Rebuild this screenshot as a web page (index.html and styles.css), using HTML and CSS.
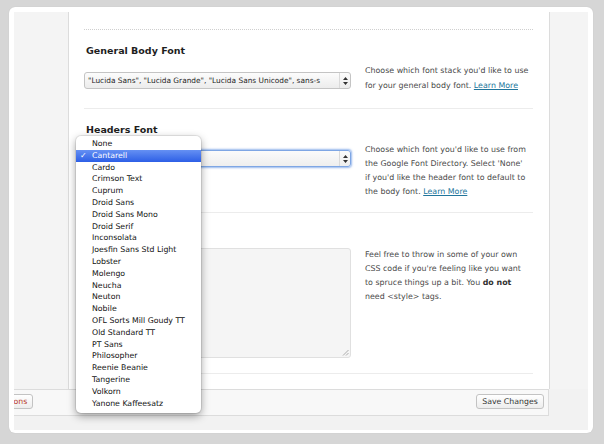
FILE: index.html
```html
<!DOCTYPE html>
<html>
<head>
<meta charset="utf-8">
<link rel="stylesheet" href="styles.css">
</head>
<body>
<div class="panel">
  <div class="inner">
    <div class="main">
      <div class="lcol"></div>
      <div class="content">
        <div class="section s1">
          <div class="field">
            <h3 class="label">General Body Font</h3>
            <div class="select">
              <span class="val">"Lucida Sans", "Lucida Grande", "Lucida Sans Unicode", sans-s</span>
              <span class="arrows"><svg width="5" height="8" viewBox="0 0 5 8"><path d="M2.5 0 L5 3 H0Z M2.5 8 L0 5 H5Z" fill="#333"/></svg></span>
            </div>
          </div>
          <p class="desc">Choose which font stack you'd like to use<br>for your general body font. <a href="#">Learn More</a></p>
        </div>
        <div class="section s2">
          <div class="field">
            <h3 class="label">Headers Font</h3>
            <div class="select focused">
              <span class="val">Cantarell</span>
              <span class="arrows"><svg width="5" height="8" viewBox="0 0 5 8"><path d="M2.5 0 L5 3 H0Z M2.5 8 L0 5 H5Z" fill="#333"/></svg></span>
            </div>
          </div>
          <p class="desc">Choose which font you'd like to use from<br>the Google Font Directory. Select 'None'<br>if you'd like the header font to default to<br>the body font. <a href="#">Learn More</a></p>
        </div>
        <div class="section s3">
          <div class="field">
            <h3 class="label">Custom CSS</h3>
            <div class="textarea">
              <svg class="grip" width="7" height="7" viewBox="0 0 7 7"><path d="M6.5 1 L1 6.5 M6.5 4 L4 6.5" stroke="#999" stroke-width="0.8"/></svg>
            </div>
          </div>
          <p class="desc">Feel free to throw in some of your own<br>CSS code if you're feeling like you want<br>to spruce things up a bit. You <b>do not</b><br>need &lt;style&gt; tags.</p>
        </div>
      </div>
      <div class="rcol"></div>
    </div>
    <div class="footer">
      <button class="btn reset">Reset Options</button>
      <button class="btn save">Save Changes</button>
    </div>
  </div>
</div>
<ul class="dropdown">
  <li>None</li>
  <li class="sel">Cantarell</li>
  <li>Cardo</li>
  <li>Crimson Text</li>
  <li>Cuprum</li>
  <li>Droid Sans</li>
  <li>Droid Sans Mono</li>
  <li>Droid Serif</li>
  <li>Inconsolata</li>
  <li>Joesfin Sans Std Light</li>
  <li>Lobster</li>
  <li>Molengo</li>
  <li>Neucha</li>
  <li>Neuton</li>
  <li>Nobile</li>
  <li>OFL Sorts Mill Goudy TT</li>
  <li>Old Standard TT</li>
  <li>PT Sans</li>
  <li>Philosopher</li>
  <li>Reenie Beanie</li>
  <li>Tangerine</li>
  <li>Volkorn</li>
  <li>Yanone Kaffeesatz</li>
</ul>
</body>
</html>
```

FILE: styles.css
```css
html, body {
  margin: 0;
  padding: 0;
}
body {
  width: 604px;
  height: 444px;
  overflow: hidden;
  background: #d6d6d6;
  font-family: "DejaVu Sans", Verdana, sans-serif;
  position: relative;
}
.panel {
  margin: 7px 0 0 9px;
  width: 584px;
  height: 426px;
  box-sizing: border-box;
  padding: 5px 5px 3px 5px;
  background: #fff;
  border-radius: 6px;
  box-shadow: 0 0 1px rgba(0,0,0,0.15);
}
.inner {
  height: 418px;
  background: #f2f2f2;
  display: flex;
  flex-direction: column;
}
.main {
  display: flex;
  height: 377px;
}
.lcol {
  width: 54px;
  background: #f4f4f4;
}
.rcol {
  width: 38px;
  background: #f4f4f4;
}
.content {
  width: 482px;
  box-sizing: border-box;
  background: #fff;
  border-left: 1px solid #dcdcdc;
  border-right: 1px solid #dcdcdc;
  padding: 17px 16px 0 15px;
}
.section {
  display: flex;
  align-items: flex-start;
  gap: 14px;
  border-bottom: 1px solid #ececec;
  padding-top: 15px;
}
.field {
  width: 267px;
  display: flex;
  flex-direction: column;
}
.s1 {
  border-top: 1px dotted #cfcfcf;
  padding-bottom: 15px;
}
.s2 {
  padding-bottom: 13px;
}
.s3 {
  padding-bottom: 15px;
}
.label {
  margin: 0 0 15px 2px;
  font-size: 9.5px;
  line-height: 12px;
  font-weight: bold;
  color: #1e1e1e;
}
.s2 .label {
  margin-bottom: 14px;
}
.s3 .label {
  margin-bottom: 8px;
}
.desc {
  width: 168px;
  margin: 19px 0 0 0;
  font-size: 7.9px;
  line-height: 14px;
  color: #4a4a4a;
  white-space: nowrap;
}
.s1 .desc {
  line-height: 14.6px;
}
.s3 .desc {
  margin-top: 20px;
}
.desc a {
  color: #21759b;
  text-decoration: underline;
}
.desc b {
  color: #333;
}
.select {
  height: 17px;
  box-sizing: border-box;
  border: 1px solid #c4c4c4;
  border-radius: 3px;
  background: linear-gradient(#fcfcfc, #ececec);
  display: flex;
  align-items: center;
  overflow: hidden;
}
.select .val {
  flex: 1;
  padding-left: 3px;
  font-size: 7.4px;
  color: #1e1e1e;
  white-space: nowrap;
  overflow: hidden;
}
.select .arrows {
  width: 10px;
  height: 100%;
  border-left: 1px solid #dadada;
  display: flex;
  align-items: center;
  justify-content: center;
}
.select.focused {
  border-color: #7ea6e4;
  box-shadow: 0 0 2px 1px rgba(110,155,230,0.7);
  background: linear-gradient(#fbfbfb, #eeeeee);
}
.textarea {
  height: 110px;
  box-sizing: border-box;
  border: 1px solid #e0e0e0;
  border-radius: 3px;
  background: #f5f5f5;
  position: relative;
}
.grip {
  position: absolute;
  right: 1px;
  bottom: 1px;
}
.footer {
  width: 535px;
  height: 27px;
  box-sizing: border-box;
  background: #f8f8f8;
  border-top: 1px solid #dcdcdc;
  border-bottom: 1px solid #dcdcdc;
  border-right: 1px solid #dcdcdc;
  display: flex;
  justify-content: space-between;
  align-items: flex-start;
  overflow: hidden;
  padding-top: 4px;
}
.btn {
  height: 15px;
  box-sizing: border-box;
  border: 1px solid #c3c3c3;
  border-radius: 3px;
  background: linear-gradient(#ffffff, #ededed);
  font-family: "DejaVu Sans", Verdana, sans-serif;
  font-size: 7.8px;
  line-height: 12px;
  padding: 0 5px;
  margin: 0;
  white-space: nowrap;
}
.reset {
  color: #b83a2a;
  margin-left: -47px;
}
.save {
  color: #333;
  width: 68px;
  margin-right: 4px;
  padding: 0;
}
.dropdown {
  position: absolute;
  left: 76px;
  top: 136px;
  width: 125px;
  height: 277px;
  box-sizing: border-box;
  margin: 0;
  padding: 2px 0 0 0;
  list-style: none;
  background: #fff;
  border-radius: 5px;
  box-shadow: 0 3px 9px rgba(0,0,0,0.38), 0 0 0 1px rgba(0,0,0,0.08);
  font-size: 7.8px;
  color: #111;
}
.dropdown li {
  height: 11.8px;
  line-height: 11.8px;
  padding-left: 16px;
  white-space: nowrap;
  position: relative;
}
.dropdown li.sel {
  background: linear-gradient(#6590f3, #2d5fe6);
  color: #fff;
}
.dropdown li.sel::before {
  content: "\2713";
  position: absolute;
  left: 4px;
  top: 0;
  font-size: 8px;
}
```
